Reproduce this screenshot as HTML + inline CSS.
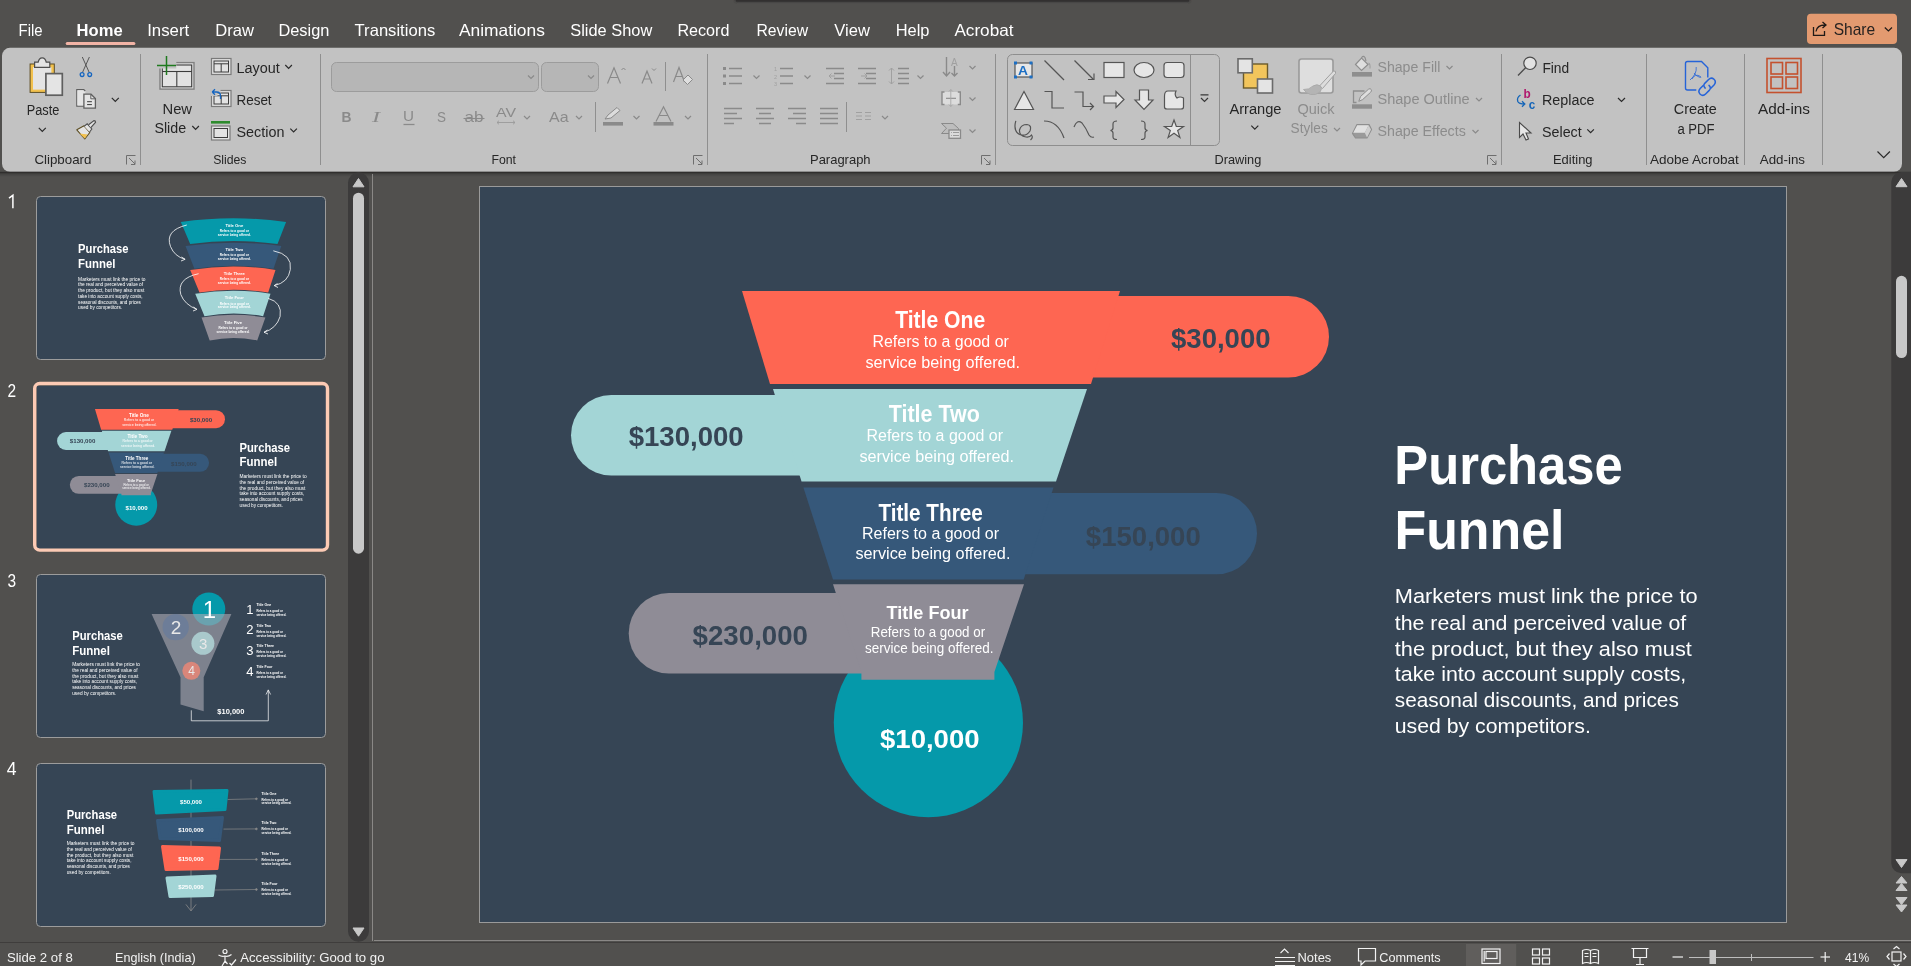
<!DOCTYPE html>
<html><head><meta charset="utf-8">
<style>
html,body{margin:0;padding:0;width:1911px;height:966px;overflow:hidden;background:#51504e;}
svg{display:block;font-family:"Liberation Sans",sans-serif;will-change:transform;}
</style></head>
<body>
<svg width="1911" height="966" viewBox="0 0 1911 966">
<defs>
<filter id="blur1" x="-5%" y="-100%" width="110%" height="300%"><feGaussianBlur stdDeviation="1"/></filter>
</defs>
<!-- background -->
<rect x="0" y="0" width="1911" height="966" fill="#51504e"/>
<!-- top search box shadow -->
<rect x="735" y="-2" width="455" height="4" rx="2" fill="#333130" filter="url(#blur1)"/>
<rect x="736" y="0" width="453" height="1.5" fill="#323030"/>

<!-- TABS -->
<g id="tabs" fill="#ffffff" font-size="16.5">
<text x="18.6" y="36" textLength="24" lengthAdjust="spacingAndGlyphs">File</text>
<text x="76.6" y="36" textLength="46" lengthAdjust="spacingAndGlyphs" font-weight="bold">Home</text>
<text x="147.2" y="36" textLength="42" lengthAdjust="spacingAndGlyphs">Insert</text>
<text x="215.3" y="36" textLength="38.7" lengthAdjust="spacingAndGlyphs">Draw</text>
<text x="278.4" y="36" textLength="51" lengthAdjust="spacingAndGlyphs">Design</text>
<text x="354.6" y="36" textLength="80.6" lengthAdjust="spacingAndGlyphs">Transitions</text>
<text x="458.9" y="36" textLength="86" lengthAdjust="spacingAndGlyphs">Animations</text>
<text x="570.3" y="36" textLength="82" lengthAdjust="spacingAndGlyphs">Slide Show</text>
<text x="677.4" y="36" textLength="52" lengthAdjust="spacingAndGlyphs">Record</text>
<text x="756.4" y="36" textLength="51.7" lengthAdjust="spacingAndGlyphs">Review</text>
<text x="834.3" y="36" textLength="35.6" lengthAdjust="spacingAndGlyphs">View</text>
<text x="895.7" y="36" textLength="33.8" lengthAdjust="spacingAndGlyphs">Help</text>
<text x="954.4" y="36" textLength="59.1" lengthAdjust="spacingAndGlyphs">Acrobat</text>
</g>
<rect x="65.7" y="42" width="69.7" height="3" rx="1.5" fill="#f2b4a6"/>

<!-- Share button -->
<rect x="1807" y="13.8" width="90" height="30.2" rx="4" fill="#e39a70"/>
<text x="1833.7" y="34.8" font-size="17" fill="#262220" textLength="41.5" lengthAdjust="spacingAndGlyphs">Share</text>

<!-- RIBBON -->
<rect x="2" y="47.8" width="1900" height="124" rx="8" fill="#c2c2c2"/>
<g id="ribbon">
<rect x="331.5" y="62.5" width="207" height="29" rx="5" fill="#b6b6b6" stroke="#9c9c9c" stroke-width="1"/>
<rect x="541.5" y="62.5" width="57" height="29" rx="5" fill="#b6b6b6" stroke="#9c9c9c" stroke-width="1"/>
<!-- separators -->
<g stroke="#8f8f8f" stroke-width="1">
<line x1="140.5" y1="54" x2="140.5" y2="165"/>
<line x1="320.5" y1="54" x2="320.5" y2="165"/>
<line x1="707.5" y1="54" x2="707.5" y2="165"/>
<line x1="995.5" y1="54" x2="995.5" y2="165"/>
<line x1="1501.5" y1="54" x2="1501.5" y2="165"/>
<line x1="1646.5" y1="54" x2="1646.5" y2="165"/>
<line x1="1744.5" y1="54" x2="1744.5" y2="165"/>
<line x1="1822.5" y1="54" x2="1822.5" y2="165"/>
<line x1="665.5" y1="62" x2="665.5" y2="91"/>
<line x1="595.5" y1="102" x2="595.5" y2="132"/>
<line x1="846.5" y1="102" x2="846.5" y2="132"/>
</g>
<!-- group labels -->
<g fill="#262626" font-size="13">
<text x="34.4" y="164" textLength="57" lengthAdjust="spacingAndGlyphs">Clipboard</text>
<text x="213.2" y="164" textLength="33.3" lengthAdjust="spacingAndGlyphs">Slides</text>
<text x="491.4" y="164" textLength="24.6" lengthAdjust="spacingAndGlyphs">Font</text>
<text x="810" y="164" textLength="60.6" lengthAdjust="spacingAndGlyphs">Paragraph</text>
<text x="1214.5" y="164" textLength="46.8" lengthAdjust="spacingAndGlyphs">Drawing</text>
<text x="1553" y="164" textLength="39.5" lengthAdjust="spacingAndGlyphs">Editing</text>
<text x="1650" y="164" textLength="88.7" lengthAdjust="spacingAndGlyphs">Adobe Acrobat</text>
<text x="1759.8" y="164" textLength="45.2" lengthAdjust="spacingAndGlyphs">Add-ins</text>
</g>
<!-- button labels -->
<g fill="#262626" font-size="14">
<text x="26.7" y="115.4" textLength="32.6" lengthAdjust="spacingAndGlyphs">Paste</text>
<text x="162.5" y="113.7" textLength="29.5" lengthAdjust="spacingAndGlyphs">New</text>
<text x="154.4" y="133.4" textLength="31.8" lengthAdjust="spacingAndGlyphs">Slide</text>
<text x="236.5" y="73" textLength="43.2" lengthAdjust="spacingAndGlyphs">Layout</text>
<text x="236.5" y="104.5" textLength="35.1" lengthAdjust="spacingAndGlyphs">Reset</text>
<text x="236.5" y="136.6" textLength="47.9" lengthAdjust="spacingAndGlyphs">Section</text>
<text x="1229.4" y="113.6" textLength="52.1" lengthAdjust="spacingAndGlyphs">Arrange</text>
<text x="1542.4" y="72.7" textLength="26.8" lengthAdjust="spacingAndGlyphs">Find</text>
<text x="1542" y="105" textLength="52.6" lengthAdjust="spacingAndGlyphs">Replace</text>
<text x="1542" y="136.6" textLength="39.7" lengthAdjust="spacingAndGlyphs">Select</text>
<text x="1673.8" y="114.2" textLength="43" lengthAdjust="spacingAndGlyphs">Create</text>
<text x="1677.4" y="134" textLength="37.2" lengthAdjust="spacingAndGlyphs">a PDF</text>
<text x="1758" y="114.2" textLength="52" lengthAdjust="spacingAndGlyphs">Add-ins</text>
</g>
<g fill="#8c8c8c" font-size="14">
<text x="1297.4" y="113.6" textLength="37.2" lengthAdjust="spacingAndGlyphs">Quick</text>
<text x="1290.6" y="133.3" textLength="37.1" lengthAdjust="spacingAndGlyphs">Styles</text>
<text x="1377.5" y="72.3" textLength="62.8" lengthAdjust="spacingAndGlyphs">Shape Fill</text>
<text x="1377.5" y="104.4" textLength="92.1" lengthAdjust="spacingAndGlyphs">Shape Outline</text>
<text x="1377.5" y="136.3" textLength="88.3" lengthAdjust="spacingAndGlyphs">Shape Effects</text>
</g>
<!-- chevrons enabled -->
<g fill="none" stroke="#2a2a2a" stroke-width="1.2">
<polyline points="38.8,127.8 42.3,131.3 45.8,127.8"/>
<polyline points="111.8,97.8 115.3,101.3 118.8,97.8"/>
<polyline points="192.3,126 195.6,129.3 198.9,126"/>
<polyline points="285.3,65 288.6,68.3 291.9,65"/>
<polyline points="290.3,128.6 293.6,131.9 296.9,128.6"/>
<polyline points="1251.3,125.6 1254.8,129.1 1258.3,125.6"/>
<polyline points="1618,98 1621.5,101.5 1625,98"/>
<polyline points="1587.3,129.3 1590.6,132.6 1593.9,129.3"/>
<polyline points="1877.5,151.5 1883.7,157.7 1889.9,151.5"/>
</g>
<!-- chevrons disabled -->
<g fill="none" stroke="#8a8a8a" stroke-width="1.2">
<polyline points="528,75.5 531,78.5 534,75.5"/>
<polyline points="588,75.5 591,78.5 594,75.5"/>
<polyline points="524,116 527,119 530,116"/>
<polyline points="576,116 579,119 582,116"/>
<polyline points="633.5,116 636.5,119 639.5,116"/>
<polyline points="685,116 688,119 691,116"/>
<polyline points="753.5,75.5 756.5,78.5 759.5,75.5"/>
<polyline points="804.5,75.5 807.5,78.5 810.5,75.5"/>
<polyline points="917.5,75.5 920.5,78.5 923.5,75.5"/>
<polyline points="969.5,66 972.5,69 975.5,66"/>
<polyline points="969.5,97.5 972.5,100.5 975.5,97.5"/>
<polyline points="969.5,129.5 972.5,132.5 975.5,129.5"/>
<polyline points="882,116 885,119 888,116"/>
<polyline points="1334,128 1337,131 1340,128"/>
<polyline points="1446.5,66 1449.5,69 1452.5,66"/>
<polyline points="1476,98 1479,101 1482,98"/>
<polyline points="1472.5,130 1475.5,133 1478.5,130"/>
</g>
<!-- launchers -->
<g fill="none" stroke="#6e6e6e" stroke-width="1">
<path d="M126.5,164.5 V155.5 H135.5 M129,158 L135,164 M135,160.5 V164.5 H131"/>
<path d="M693.5,164.5 V155.5 H702.5 M696,158 L702,164 M702,160.5 V164.5 H698"/>
<path d="M981.5,164.5 V155.5 H990.5 M984,158 L990,164 M990,160.5 V164.5 H986"/>
<path d="M1487.5,164.5 V155.5 H1496.5 M1490,158 L1496,164 M1496,160.5 V164.5 H1492"/>
</g>

<!-- CLIPBOARD ICONS -->
<!-- paste -->
<rect x="29.6" y="63.5" width="25.2" height="29.4" fill="#5c4d22"/>
<rect x="30.6" y="64.5" width="23.2" height="27.4" fill="#f2c14e"/>
<rect x="33" y="67" width="18.4" height="22.6" fill="#e4e4e4"/>
<path d="M34.6,67.4 V62.2 H38.2 Q39,57.8 42.2,57.8 Q45.4,57.8 46.2,62.2 H49.8 V67.4 Z" fill="#e4e4e4" stroke="#4e4e4e" stroke-width="1.2"/>
<rect x="45.9" y="73.6" width="16.4" height="21.6" fill="#e4e4e4" stroke="#5f5f5f" stroke-width="1.7"/>
<!-- cut -->
<g stroke="#4a4a4a" stroke-width="0.9" fill="none">
<line x1="82.3" y1="57" x2="89.2" y2="72.4"/>
<line x1="89.4" y1="57" x2="82.5" y2="72.4"/>
</g>
<g stroke="#1565c0" stroke-width="1.3" fill="none">
<circle cx="82.1" cy="74.6" r="1.9"/>
<circle cx="89.7" cy="74.6" r="1.9"/>
</g>
<!-- copy -->
<path d="M85.3,106.2 H76.8 V89.7 H83.8 L85.3,91.2" fill="#e4e4e4" stroke="#5f5f5f" stroke-width="1.2"/>
<rect x="77.4" y="90.3" width="6" height="15.2" fill="#e4e4e4"/>
<path d="M83.9,108.2 V94.2 H91 L95.4,98.6 V108.2 Z" fill="#e4e4e4" stroke="#5f5f5f" stroke-width="1.3"/>
<path d="M90.8,94.4 V98.8 H95.2" fill="none" stroke="#5f5f5f" stroke-width="1"/>
<g stroke="#3a3a3a" stroke-width="1"><line x1="87.1" y1="101.7" x2="91.9" y2="101.7"/><line x1="87.1" y1="104.6" x2="91.9" y2="104.6"/></g>
<!-- format painter -->
<path d="M76.8,129.8 L84,125.8 L89.8,132.5 L84.8,139 Z" fill="#e4e4e4" stroke="#5c4d22" stroke-width="1.1" stroke-linejoin="round"/>
<path d="M79.5,133.6 L87.6,134.6 L84.8,138.6 Z" fill="#f2c14e"/>
<path d="M84.2,126.2 L87.2,123.8 L91.8,129 L89.6,132" fill="#e4e4e4" stroke="#4e4e4e" stroke-width="1.1"/>
<path d="M88.6,124.8 L94,120.6 Q95.6,120.6 95.6,122.2 L90.8,127.6" fill="#e4e4e4" stroke="#4e4e4e" stroke-width="1.1"/>

<!-- SLIDES ICONS -->
<rect x="160" y="62.6" width="34" height="26.5" fill="#e2e2e2" stroke="#808080" stroke-width="1.4"/>
<rect x="162.3" y="65" width="29.4" height="21.8" fill="#e2e2e2" stroke="#3c3c3c" stroke-width="1.1"/>
<line x1="162.3" y1="71.5" x2="191.7" y2="71.5" stroke="#3c3c3c" stroke-width="1.1"/>
<line x1="176.8" y1="71.5" x2="176.8" y2="86.8" stroke="#3c3c3c" stroke-width="1.1"/>
<rect x="158.3" y="60.5" width="18" height="8" fill="#c2c2c2"/>
<g stroke="#1f7a1f" stroke-width="1.5"><line x1="157" y1="65.5" x2="176" y2="65.5"/><line x1="166.5" y1="56" x2="166.5" y2="75"/></g>
<!-- layout -->
<rect x="211.5" y="58.5" width="19.5" height="16" fill="#e2e2e2" stroke="#7a7a7a" stroke-width="1.2"/>
<rect x="214" y="61" width="14.5" height="11" fill="#e2e2e2" stroke="#3c3c3c" stroke-width="1"/>
<line x1="214" y1="63.8" x2="228.5" y2="63.8" stroke="#3c3c3c" stroke-width="1"/>
<line x1="221.2" y1="63.8" x2="221.2" y2="72" stroke="#3c3c3c" stroke-width="1"/>
<!-- reset -->
<rect x="211.5" y="90.5" width="19.5" height="16" fill="#e2e2e2" stroke="#7a7a7a" stroke-width="1.2"/>
<rect x="214" y="93" width="14.5" height="11" fill="#e2e2e2" stroke="#3c3c3c" stroke-width="1"/>
<line x1="214" y1="95.8" x2="228.5" y2="95.8" stroke="#3c3c3c" stroke-width="1"/>
<line x1="221.2" y1="95.8" x2="221.2" y2="104" stroke="#3c3c3c" stroke-width="1"/>
<path d="M210.5,89 h10 v4 h-3 v3 h-7 Z" fill="#c2c2c2"/>
<path d="M212.2,92 L215,89.2 M212.2,92 L215,94.8 M212.2,92 H216.5 Q220.5,92 220.5,96 V99" fill="none" stroke="#1565c0" stroke-width="1.3"/>
<!-- section -->
<rect x="211" y="121" width="19" height="2.6" fill="#2e8b2e"/>
<rect x="211.5" y="126" width="18.5" height="14" fill="#e2e2e2" stroke="#7a7a7a" stroke-width="1.2"/>
<rect x="214" y="128.5" width="13.5" height="9" fill="#e2e2e2" stroke="#3c3c3c" stroke-width="1"/>

<!-- FONT GROUP -->
<g fill="none" stroke="#8a8a8a" stroke-width="1.2">
<path d="M607.5,83.5 L614,67.8 L620.5,83.5 M610,77.5 H618"/>
<path d="M642,83.5 L647,71.2 L652,83.5 M643.8,79 H650.2"/>
<path d="M673.5,82 L679,67.5 L684.5,82 M675.8,76.5 H682"/>
<path d="M656,121.5 L663.5,106.8 L671,121.5 M659,115.5 H668"/>
</g>
<g fill="none" stroke="#8a8a8a" stroke-width="1">
<polyline points="621.5,70 623.5,68 625.5,70"/>
<polyline points="652,68.5 654,70.5 656,68.5"/>
</g>
<path d="M683,80 L688,75 L692.5,79.5 L687.5,84.5 Z" fill="#dedede" stroke="#8a8a8a" stroke-width="1"/>
<g fill="#8a8a8a" font-size="15">
<text x="341.4" y="122" font-weight="bold" textLength="10" lengthAdjust="spacingAndGlyphs">B</text>
<text x="372" y="122" font-style="italic" font-family="Liberation Serif" textLength="8" lengthAdjust="spacingAndGlyphs">I</text>
<text x="403" y="121" textLength="11" lengthAdjust="spacingAndGlyphs">U</text>
<text x="437" y="122" textLength="9" lengthAdjust="spacingAndGlyphs">S</text>
<text x="464.5" y="122" font-size="14" textLength="19" lengthAdjust="spacingAndGlyphs">ab</text>
<text x="496" y="117" font-size="13" textLength="20" lengthAdjust="spacingAndGlyphs">AV</text>
<text x="549" y="122" font-size="15" textLength="19.5" lengthAdjust="spacingAndGlyphs">Aa</text>
</g>
<line x1="403.5" y1="124.5" x2="414.5" y2="124.5" stroke="#8a8a8a" stroke-width="1.3"/>
<line x1="463.5" y1="118.5" x2="484.5" y2="118.5" stroke="#8a8a8a" stroke-width="1.1"/>
<g fill="none" stroke="#9a9a9a" stroke-width="0.9"><path d="M497,122.5 H515 M497,122.5 l2,-1.8 M497,122.5 l2,1.8 M515,122.5 l-2,-1.8 M515,122.5 l-2,1.8"/></g>
<rect x="603" y="122" width="20" height="3.6" fill="#8a8a8a"/>
<path d="M605,119 L608,115 L617,107.5 L620,110.5 L611,118 Z" fill="#dcdcdc" stroke="#8a8a8a" stroke-width="1"/>
<rect x="653.5" y="122" width="20" height="3.6" fill="#8a8a8a"/>

<!-- PARAGRAPH GROUP -->
<g fill="#8a8a8a">
<rect x="723" y="67" width="3" height="3"/><rect x="723" y="74.5" width="3" height="3"/><rect x="723" y="82" width="3" height="3"/>
</g>
<g stroke="#8a8a8a" stroke-width="1.5" fill="none">
<path d="M729,68.5 H742 M729,76 H742 M729,83.5 H742"/>
<path d="M780,68.5 H793 M780,76 H793 M780,83.5 H793"/>
<path d="M826,68.5 H844 M834,73.5 H844 M834,78.5 H844 M826,83.5 H844"/>
<path d="M858,68.5 H876 M866,73.5 H876 M866,78.5 H876 M858,83.5 H876"/>
<path d="M898,68.5 H909 M898,73.5 H909 M898,78.5 H909 M898,83.5 H909"/>
<path d="M724,108.5 H742 M724,113.5 H737 M724,118.5 H742 M724,123.5 H734"/>
<path d="M756,108.5 H774 M759,113.5 H771 M756,118.5 H774 M759,123.5 H771"/>
<path d="M788,108.5 H806 M793,113.5 H806 M788,118.5 H806 M796,123.5 H806"/>
<path d="M820,108.5 H838 M820,113.5 H838 M820,118.5 H838 M820,123.5 H838"/>
</g>
<g stroke="#a0a0a0" stroke-width="1" fill="none">
<path d="M856,112.5 H862 M856,116 H862 M856,119.5 H862 M865,112.5 H871 M865,116 H871 M865,119.5 H871"/>
<path d="M829,76 H835 M829,76 l2.5,-2.5 M829,76 l2.5,2.5"/>
<path d="M861,76 H867 M867,76 l-2.5,-2.5 M867,76 l-2.5,2.5"/>
<path d="M891.5,68 V84 M891.5,68 l-2.5,2.5 M891.5,68 l2.5,2.5 M891.5,84 l-2.5,-2.5 M891.5,84 l2.5,-2.5"/>
</g>
<g fill="#a0a0a0" font-size="5.5"><text x="774" y="71">1</text><text x="774" y="78.5">2</text><text x="774" y="86">3</text></g>
<!-- text direction -->
<g stroke="#8a8a8a" stroke-width="1.4" fill="none">
<path d="M946.5,57 V76 M943,72 L946.5,76 L950,72"/>
<path d="M954.5,66 V76 M951.5,73 L954.5,76 L957.5,73"/>
</g>
<text x="951" y="66" font-size="10" fill="#a0a0a0">A</text>
<!-- align text -->
<rect x="942" y="92" width="18.3" height="12.5" fill="#dcdcdc"/>
<path d="M944.5,92 H942 V104.5 H944.5 M957.8,92 H960.3 V104.5 H957.8" fill="none" stroke="#8a8a8a" stroke-width="1.4"/>
<line x1="946" y1="98.3" x2="956" y2="98.3" stroke="#8a8a8a" stroke-width="1.1"/>
<path d="M950.8,89.5 V106.5 M948.8,91.5 l2,-2 l2,2 M948.8,104.5 l2,2 l2,-2" stroke="#a8a8a8" fill="none" stroke-width="0.9"/>
<!-- smartart -->
<path d="M941.5,133.5 L946.5,128.2 L941.5,123.5 H953 L958.5,128.5 V133.5 Z" fill="#bdbdbd" stroke="#8a8a8a" stroke-width="1"/>
<rect x="949" y="130" width="11.5" height="8.3" fill="#dcdcdc" stroke="#8a8a8a" stroke-width="1.3"/>
<path d="M951,132.5 h0.8 M951,135.5 h0.8 M953,132.5 H959 M953,135.5 H959" stroke="#8a8a8a" stroke-width="0.8"/>

<!-- DRAWING GALLERY -->
<rect x="1007.5" y="54.5" width="212" height="91" rx="5" fill="none" stroke="#8e8e8e" stroke-width="1"/>
<line x1="1190.5" y1="54.5" x2="1190.5" y2="145.5" stroke="#8e8e8e" stroke-width="1"/>
<g stroke="#383838" stroke-width="1.2" fill="none"><path d="M1200.5,94.8 H1208.5 M1201,98 L1204.5,101.5 L1208,98"/></g>
<g stroke="#555" stroke-width="1.2" fill="#e6e6e6">
<rect x="1015" y="63" width="17" height="14"/>
<rect x="1104" y="62.5" width="20" height="15"/>
<ellipse cx="1144" cy="70" rx="10" ry="7.5"/>
<rect x="1164" y="62.5" width="20" height="15" rx="3"/>
<path d="M1014.5,109.5 L1024,91.5 L1033.5,109.5 Z"/>
<path d="M1104,96 H1116 V91.5 L1124,99.5 L1116,107.5 V103 H1104 Z"/>
<path d="M1139.5,90 H1148.5 V100 H1153 L1144,109.5 L1135,100 H1139.5 Z"/>
<path d="M1164.5,96 Q1164.5,91 1168,91 H1176 Q1174,95 1177,98 Q1180,96 1183.5,98 V107 Q1183.5,109 1181,109 H1167 Q1164.5,109 1164.5,107 Z"/>
<path d="M1139.5,120 L1141.8,126.5 L1149,126.5 L1143.2,130.6 L1145.4,137.5 L1139.5,133.3 L1133.6,137.5 L1135.8,130.6 L1130,126.5 L1137.2,126.5 Z" transform="translate(34.5,0)"/>
</g>
<g stroke="#555" stroke-width="1.2" fill="none">
<line x1="1044.5" y1="60.5" x2="1064" y2="80"/>
<line x1="1074.5" y1="60.5" x2="1093.5" y2="79.5"/>
<path d="M1088,79.5 H1094 V73.5"/>
<path d="M1044.5,91.5 H1052 V108 H1064"/>
<path d="M1074.5,92 H1083 V106.5 H1093.5 M1090,103 L1093.5,106.5 L1090,110"/>
<path d="M1015.8,120.8 Q1013,131 1019.5,134.5 Q1026,137 1030,131 Q1032,125 1027,124.5 Q1021,124.5 1019.5,130 Q1019,136 1026,137 Q1030,137.5 1031.5,135 Q1033.5,137.5 1030.5,140"/>
<path d="M1044,121 Q1058,121 1064,138"/>
<path d="M1074,127 Q1077,119 1082,123 Q1086,128 1089,135 Q1091,138 1094,137"/>
<path d="M1117,121 Q1113,121 1113,124 V128 Q1113,130 1110.5,130.5 Q1113,131 1113,133 V137 Q1113,139.5 1117,139.5"/>
<path d="M1141,121 Q1145,121 1145,124 V128 Q1145,130 1147.5,130.5 Q1145,131 1145,133 V137 Q1145,139.5 1141,139.5"/>
</g>
<!-- text box icon -->
<g fill="#1c6fc4">
<rect x="1014" y="61.5" width="3" height="3"/><rect x="1029.5" y="61.5" width="3" height="3"/>
<rect x="1014" y="75.5" width="3" height="3"/><rect x="1029.5" y="75.5" width="3" height="3"/>
</g>
<text x="1018" y="75" font-size="12" font-weight="bold" fill="#1c6fc4" textLength="10" lengthAdjust="spacingAndGlyphs">A</text>

<!-- ARRANGE -->
<rect x="1243.5" y="64" width="24" height="24" fill="#f2c55c" stroke="#6b5a2a" stroke-width="1.4"/>
<rect x="1238" y="58.8" width="14.3" height="14" fill="#e4e4e4" stroke="#6a6a6a" stroke-width="1.6"/>
<rect x="1257.5" y="79" width="15" height="14" fill="#e4e4e4" stroke="#6a6a6a" stroke-width="1.6"/>
<!-- QUICK STYLES -->
<rect x="1299" y="59" width="34" height="34" rx="2.5" fill="#dedede" stroke="#9a9a9a" stroke-width="1.6"/>
<path d="M1333.5,71 Q1336.5,70.5 1335.5,73.5 L1322.5,88.5 L1319.5,86 Z" fill="#dcdcdc" stroke="#a0a0a0" stroke-width="1"/>
<path d="M1303.5,89.5 Q1309,90 1313,86 Q1317,83.5 1320.5,86 Q1322.5,89 1320,92 Q1316,95.5 1310.5,94.5 Q1306,93 1303.5,89.5 Z" fill="#b4b4b4" stroke="#a8a8a8" stroke-width="0.9"/>
<!-- shape fill -->
<rect x="1352" y="72" width="20" height="4.6" fill="#8e8e8e"/>
<path d="M1355.5,64.5 L1361.5,58 L1368,64.5 L1361.5,70.5 Z" fill="#dedede" stroke="#8e8e8e" stroke-width="1.2"/>
<path d="M1361.5,58 Q1363,55 1365,57.5 L1366,61" fill="none" stroke="#8e8e8e" stroke-width="1.1"/>
<path d="M1368.5,63 Q1370.5,64 1370,68.5" fill="none" stroke="#a0a0a0" stroke-width="1.1"/>
<!-- shape outline -->
<rect x="1352" y="104.3" width="20" height="4.4" fill="#8e8e8e"/>
<path d="M1356.5,102.5 H1353.5 V91 H1364.5" fill="none" stroke="#8e8e8e" stroke-width="1.3"/>
<path d="M1358.8,101.3 L1360.5,96.5 L1368.5,89.2 Q1370.3,88 1371.2,89.5 Q1372,91 1370.7,92.2 L1362.6,99.6 Z" fill="#dedede" stroke="#8e8e8e" stroke-width="1"/>
<!-- shape effects -->
<path d="M1352.5,133.5 L1357,124.5 H1369 L1371.5,129.5 L1367,138 H1355.5 Z" fill="#9a9a9a" stroke="#8e8e8e" stroke-width="1.2" stroke-linejoin="round"/>
<path d="M1353.2,132.8 L1357.2,125.2 H1368.6 L1364.8,132.8 Z" fill="#e0e0e0"/>
<path d="M1364.8,132.8 L1368.6,125.2 L1371,129.6 L1367,137.4 Z" fill="#cfcfcf"/>

<!-- EDITING -->
<circle cx="1530" cy="63.3" r="6.2" fill="#e2e2e2" stroke="#4a4a4a" stroke-width="1.2"/>
<line x1="1525.6" y1="67.7" x2="1518" y2="75.5" stroke="#4a4a4a" stroke-width="1.3"/>
<text x="1523.6" y="98.3" font-size="12.5" font-weight="bold" fill="#b0186e" textLength="7.2" lengthAdjust="spacingAndGlyphs">b</text>
<text x="1528.8" y="108.6" font-size="12.5" font-weight="bold" fill="#1565b8" textLength="6.5" lengthAdjust="spacingAndGlyphs">c</text>
<path d="M1520.5,95 Q1516.5,97.5 1517.8,101.5 Q1519,104 1524.5,104 M1522,101.2 L1524.8,104 L1522,106.8" fill="none" stroke="#1565b8" stroke-width="1.3"/>
<path d="M1519.5,122.5 V137.5 L1523,134 L1526,140 L1528.5,139 L1526,133 H1531 Z" fill="#e6e6e6" stroke="#4a4a4a" stroke-width="1.1"/>
<!-- create pdf -->
<path d="M1696.3,90 H1687.5 Q1685.5,90 1685.5,88 V63.5 Q1685.5,61.5 1687.5,61.5 H1701.5 L1707.8,67.8 V77.5" fill="none" stroke="#2563d8" stroke-width="1.4"/>
<path d="M1696.2,67 Q1697,74 1690,80 M1692,79 Q1695,73 1700.5,76.5 Q1702,78 1699,77 Q1696,76 1694,73" fill="none" stroke="#2563d8" stroke-width="0.8"/>
<g fill="none" stroke="#2563d8" stroke-width="1.5" stroke-linecap="round">
<path d="M1703.2,85.5 L1700.2,88.5 Q1697.5,91.5 1700.2,94.2 Q1702.9,96.7 1705.6,94 L1709.2,90.4 Q1711.6,87.8 1709,85.4"/>
<path d="M1710.8,88.2 L1714,85 Q1716.7,82 1714,79.3 Q1711.3,76.8 1708.6,79.5 L1705,83.1 Q1702.6,85.7 1705.2,88.1"/>
</g>
<!-- add-ins -->
<g fill="none" stroke="#c4512e" stroke-width="1.6">
<rect x="1767" y="58.5" width="34" height="34"/>
<rect x="1771" y="62.5" width="11.5" height="11.5"/>
<rect x="1786" y="62.5" width="11.5" height="11.5"/>
<rect x="1771" y="77" width="11.5" height="11.5"/>
<rect x="1786" y="77" width="11.5" height="11.5"/>
</g>
</g>


<!-- ribbon bottom shadow -->
<linearGradient id="shd" x1="0" y1="0" x2="0" y2="1"><stop offset="0" stop-color="#000" stop-opacity="0.22"/><stop offset="1" stop-color="#000" stop-opacity="0"/></linearGradient>
<rect x="0" y="173" width="1911" height="4" fill="url(#shd)"/>
<rect x="0" y="171.8" width="1911" height="1.4" fill="#302e2d"/>

<!-- LEFT PANEL -->
<g id="leftpanel">
<!-- slide numbers -->
<g fill="#ffffff" font-size="18.5">

<text x="7.6" y="397.3" textLength="8.6" lengthAdjust="spacingAndGlyphs">2</text>
<text x="7.6" y="586.6" textLength="8.6" lengthAdjust="spacingAndGlyphs">3</text>
<text x="6.8" y="775" textLength="9.8" lengthAdjust="spacingAndGlyphs">4</text>
</g>
<path d="M9,198.2 L12.9,195.3 V208.2" fill="none" stroke="#ffffff" stroke-width="1.5"/>
<!-- scrollbar -->
<rect x="348" y="172.3" width="21" height="769.5" rx="10.5" fill="#3c3b3b"/>
<path d="M358.5,178.5 L364,186.8 H353 Z" fill="#c8c8c8" stroke="#c8c8c8" stroke-width="1" stroke-linejoin="round"/>
<rect x="353" y="192.7" width="11" height="361" rx="5.5" fill="#c8c8c8"/>
<path d="M358.5,936.2 L364,928 H353 Z" fill="#c8c8c8" stroke="#c8c8c8" stroke-width="1" stroke-linejoin="round"/>
<line x1="372.5" y1="174" x2="372.5" y2="941" stroke="#8a8886" stroke-width="1"/>

<!-- THUMB 1 -->
<g transform="translate(36.5,196.5)">
<rect x="0" y="0" width="289" height="163" rx="4" fill="#364555" stroke="#9c9c9c" stroke-width="1"/>
<g fill="#ffffff" font-weight="bold" font-size="12.5">
<text x="41.6" y="56.9" textLength="50.4" lengthAdjust="spacingAndGlyphs">Purchase</text>
<text x="41.6" y="71.6" textLength="37.4" lengthAdjust="spacingAndGlyphs">Funnel</text>
</g>
<g fill="#ffffff" font-size="5.4">
<text x="41.6" y="84" textLength="67.4" lengthAdjust="spacingAndGlyphs">Marketers must link the price to</text>
<text x="41.6" y="89.8" textLength="65" lengthAdjust="spacingAndGlyphs">the real and perceived value of</text>
<text x="41.6" y="95.6" textLength="66.2" lengthAdjust="spacingAndGlyphs">the product, but they also must</text>
<text x="41.6" y="101.2" textLength="64.5" lengthAdjust="spacingAndGlyphs">take into account supply costs,</text>
<text x="41.6" y="107" textLength="62.8" lengthAdjust="spacingAndGlyphs">seasonal discounts, and prices</text>
<text x="41.6" y="112.5" textLength="44.1" lengthAdjust="spacingAndGlyphs">used by competitors.</text>
</g>
<path d="M144.3,25.5 Q197,18 249.6,25.5 L241,47.5 Q197,41.5 153.7,47.5 Z" fill="#0599aa"/>
<path d="M149,49.5 Q197,43 244.8,49.5 L237,72.2 Q197,66.5 157.9,72.2 Z" fill="#36587a"/>
<path d="M153.7,73.5 Q197,66.5 239,73.5 L231.7,96 Q197,90.5 163,96 Z" fill="#fe6652"/>
<path d="M158.7,97.3 Q197,91 234,97.3 L226.6,119.7 Q197,114.5 168,119.7 Z" fill="#a3d5d6"/>
<path d="M165,121 Q197,115.5 228.9,121 L220.7,144 Q197,139 173.2,144 Z" fill="#8f8c96"/>
<g fill="none" stroke="#ffffff" stroke-width="0.8">
<path d="M150.3,28.5 Q128,34 134,50 Q138,60 148.6,62.8"/>
<path d="M236.8,54.3 Q256,58 253.8,73 Q252,86 237.7,89.1"/>
<path d="M162.1,77.2 Q140,82 144.3,98 Q148,108 160.4,112.9"/>
<path d="M231.7,101.9 Q246,106 243.6,120 Q240,132 227.5,135.8"/>
<path d="M145,60.5 L148.6,62.8 L144.5,64.5 M241,87 L237.7,89.1 L241.5,91 M157,110.5 L160.4,112.9 L156.5,114.5 M231,133.5 L227.5,135.8 L231.5,137.5"/>
</g>
<g fill="#ffffff" font-weight="bold" text-anchor="middle">
<g font-size="4.2"><text x="197.8" y="30.6">Title One</text><text x="197.8" y="54.7">Title Two</text><text x="197.8" y="78.8">Title Three</text><text x="197.8" y="102.9">Title Four</text><text x="196.5" y="127">Title Five</text></g>
<g font-size="3.2"><text x="197.8" y="35.7">Refers to a good or</text><text x="197.8" y="39.6">service being offered.</text>
<text x="197.8" y="59.8">Refers to a good or</text><text x="197.8" y="63.7">service being offered.</text>
<text x="197.8" y="83.9">Refers to a good or</text><text x="197.8" y="87.8">service being offered.</text>
<text x="197.8" y="108">Refers to a good or</text><text x="197.8" y="111.9">service being offered.</text>
<text x="196.5" y="132.1">Refers to a good or</text><text x="196.5" y="136">service being offered.</text></g>
</g>
</g>

<!-- THUMB 2 (selected) -->
<g transform="translate(36.9,386) scale(0.22155) translate(-480,-187)">
<use href="#slide2"/>
</g>
<rect x="34.7" y="383.5" width="292.8" height="166.6" rx="5" fill="none" stroke="#fccab4" stroke-width="3.4"/>

<!-- THUMB 3 -->
<g transform="translate(36.5,574.5)">
<rect x="0" y="0" width="289" height="163" rx="4" fill="#364555" stroke="#9c9c9c" stroke-width="1"/>
<g fill="#ffffff" font-weight="bold" font-size="12.5">
<text x="35.7" y="65.9" textLength="50.6" lengthAdjust="spacingAndGlyphs">Purchase</text>
<text x="35.7" y="80.6" textLength="37.7" lengthAdjust="spacingAndGlyphs">Funnel</text>
</g>
<g fill="#ffffff" font-size="5.4">
<text x="35.7" y="91.7" textLength="67.9" lengthAdjust="spacingAndGlyphs">Marketers must link the price to</text>
<text x="35.7" y="97.6" textLength="65.4" lengthAdjust="spacingAndGlyphs">the real and perceived value of</text>
<text x="35.7" y="103.2" textLength="66.2" lengthAdjust="spacingAndGlyphs">the product, but they also must</text>
<text x="35.7" y="108.7" textLength="64.9" lengthAdjust="spacingAndGlyphs">take into account supply costs,</text>
<text x="35.7" y="114.6" textLength="63.7" lengthAdjust="spacingAndGlyphs">seasonal discounts, and prices</text>
<text x="35.7" y="120.5" textLength="44.1" lengthAdjust="spacingAndGlyphs">used by competitors.</text>
</g>
<circle cx="172.3" cy="34.5" r="16.5" fill="#0599aa"/>
<path d="M115.1,39.4 H194.9 L167.2,102.7 V136.7 L144,129.9 V102.7 Z" fill="#a9a8b2" opacity="0.62"/>
<circle cx="139.2" cy="52.6" r="13.2" fill="#6d7d98"/>
<circle cx="166.4" cy="68.8" r="11.5" fill="#a9c9cc"/>
<circle cx="154.8" cy="96.3" r="9" fill="#d9867a"/>
<g fill="#e8e8e8" text-anchor="middle">
<text x="173" y="43.5" font-size="24" fill="#ffffff">1</text>
<text x="139.5" y="59.5" font-size="19">2</text>
<text x="166.6" y="74.6" font-size="15">3</text>
<text x="155" y="100.8" font-size="12">4</text>
</g>
<g fill="#ffffff" font-size="13">
<text x="209.7" y="39.9">1</text><text x="209.7" y="59.8">2</text><text x="209.7" y="80.6">3</text><text x="209.7" y="101.5">4</text>
</g>
<g fill="#ffffff" font-weight="bold">
<g font-size="3.5"><text x="219.9" y="31.7">Title One</text><text x="219.9" y="52.5">Title Two</text><text x="219.9" y="72.6">Title Three</text><text x="219.9" y="93.5">Title Four</text></g>
<g font-size="2.9"><text x="219.9" y="37.5">Refers to a good or</text><text x="219.9" y="41">service being offered.</text>
<text x="219.9" y="58.5">Refers to a good or</text><text x="219.9" y="62">service being offered.</text>
<text x="219.9" y="78.5">Refers to a good or</text><text x="219.9" y="82">service being offered.</text>
<text x="219.9" y="99.5">Refers to a good or</text><text x="219.9" y="103">service being offered.</text></g>
</g>
<path d="M154.8,135.8 V146.3 H231.8 V115.4 M229.5,120 L231.8,115.4 L234.1,120" fill="none" stroke="#ffffff" stroke-width="0.7"/>
<text x="180.8" y="139.6" font-size="6.3" font-weight="bold" fill="#ffffff" textLength="27.2" lengthAdjust="spacingAndGlyphs">$10,000</text>
</g>

<!-- THUMB 4 -->
<g transform="translate(36.5,763.5)">
<rect x="0" y="0" width="289" height="163" rx="4" fill="#364555" stroke="#9c9c9c" stroke-width="1"/>
<g fill="#ffffff" font-weight="bold" font-size="12.5">
<text x="30.2" y="55.7" textLength="50.4" lengthAdjust="spacingAndGlyphs">Purchase</text>
<text x="30.2" y="70.5" textLength="37.7" lengthAdjust="spacingAndGlyphs">Funnel</text>
</g>
<g fill="#ffffff" font-size="5.4">
<text x="30.2" y="81.5" textLength="67.9" lengthAdjust="spacingAndGlyphs">Marketers must link the price to</text>
<text x="30.2" y="87.4" textLength="65.2" lengthAdjust="spacingAndGlyphs">the real and perceived value of</text>
<text x="30.2" y="93.4" textLength="66.6" lengthAdjust="spacingAndGlyphs">the product, but they also must</text>
<text x="30.2" y="98.8" textLength="64.9" lengthAdjust="spacingAndGlyphs">take into account supply costs,</text>
<text x="30.2" y="104.4" textLength="63.2" lengthAdjust="spacingAndGlyphs">seasonal discounts, and prices</text>
<text x="30.2" y="110.4" textLength="44.1" lengthAdjust="spacingAndGlyphs">used by competitors.</text>
</g>
<path d="M154.5,16.1 V147.4 M149.4,140.9 L154.5,147.4 L159.6,140.9" fill="none" stroke="#8a8a8a" stroke-width="0.8"/>
<g stroke="#8a8a8a" stroke-width="0.7" fill="#8a8a8a">
<path d="M191,36 L219.9,35.3" fill="none"/><circle cx="219.9" cy="35.3" r="0.9"/>
<path d="M187,65.6 L219.9,65.4" fill="none"/><circle cx="219.9" cy="65.4" r="0.9"/>
<path d="M182,95.9 L219.9,95.9" fill="none"/><circle cx="219.9" cy="95.9" r="0.9"/>
<path d="M178,126.5 L219.9,126" fill="none"/><circle cx="219.9" cy="126" r="0.9"/>
</g>
<g stroke-linejoin="round" stroke-width="3">
<path d="M117.5,28 L190.5,27 L188.5,46 L120,49.5 Z" fill="#0599aa" stroke="#0599aa"/>
<path d="M121,57 L186,54 L183,77 L123.5,75 Z" fill="#36587a" stroke="#36587a"/>
<path d="M126,83 L183,84.5 L180.5,105 L129.5,106 Z" fill="#fe6652" stroke="#fe6652"/>
<path d="M130.5,114.5 L178.5,112.5 L176,132 L133.5,133 Z" fill="#a3d5d6" stroke="#a3d5d6"/>
</g>
<g fill="#ffffff" font-weight="bold" font-size="5.2" text-anchor="middle">
<text x="154.5" y="40" textLength="22" lengthAdjust="spacingAndGlyphs">$50,000</text>
<text x="154.5" y="68.4" textLength="25.5" lengthAdjust="spacingAndGlyphs">$100,000</text>
<text x="154.5" y="97.2" textLength="25.5" lengthAdjust="spacingAndGlyphs">$150,000</text>
<text x="154.5" y="125.2" textLength="25.5" lengthAdjust="spacingAndGlyphs">$250,000</text>
</g>
<g fill="#ffffff" font-weight="bold">
<g font-size="3.5"><text x="225" y="31.4">Title One</text><text x="225" y="60.5">Title Two</text><text x="225" y="91.5">Title Three</text><text x="225" y="121.5">Title Four</text></g>
<g font-size="2.9"><text x="225" y="37">Refers to a good or</text><text x="225" y="40.8">service being offered.</text>
<text x="225" y="66.5">Refers to a good or</text><text x="225" y="70.3">service being offered.</text>
<text x="225" y="97.5">Refers to a good or</text><text x="225" y="101.3">service being offered.</text>
<text x="225" y="127.2">Refers to a good or</text><text x="225" y="131">service being offered.</text></g>
</g>
</g>
</g>


<!-- MAIN SLIDE -->
<rect x="479.5" y="186.5" width="1307" height="736" fill="none" stroke="#9a9a9a" stroke-width="1"/>
<g id="slide2">
<rect x="480" y="187" width="1306" height="735" fill="#364555"/>
<circle cx="928.4" cy="722.7" r="94.6" fill="#0599aa"/>
<rect x="1000" y="296" width="329" height="81.5" rx="40.7" fill="#fe6652"/>
<polygon points="742,291 1120,291 1091,384 770,384" fill="#fe6652"/>
<rect x="571" y="395" width="330" height="80.5" rx="40.2" fill="#a3d5d6"/>
<polygon points="773,389 1087,389 1056,481.5 801.5,481.5" fill="#a3d5d6"/>
<rect x="950" y="493" width="307" height="81.3" rx="40.6" fill="#36587a"/>
<polygon points="803.4,487.4 1053.5,487.4 1023.7,579.6 833,579.6" fill="#36587a"/>
<rect x="628.7" y="593" width="330" height="80.5" rx="40.2" fill="#8f8c96"/>
<polygon points="833,584.2 1024,584.2 994.4,672 994.4,679.8 861.4,679.8 861.4,672" fill="#8f8c96"/>
<g fill="#ffffff" font-weight="bold">
<text x="895.2" y="328.2" font-size="24" textLength="90" lengthAdjust="spacingAndGlyphs">Title One</text>
<text x="888.8" y="422.1" font-size="24" textLength="91" lengthAdjust="spacingAndGlyphs">Title Two</text>
<text x="878.4" y="520.6" font-size="24" textLength="104.4" lengthAdjust="spacingAndGlyphs">Title Three</text>
<text x="886.6" y="618.6" font-size="19" textLength="82" lengthAdjust="spacingAndGlyphs">Title Four</text>
<text x="880" y="748" font-size="26.5" textLength="99.6" lengthAdjust="spacingAndGlyphs">$10,000</text>
</g>
<g fill="#ffffff" font-size="16">
<text x="872.5" y="347.2" textLength="136.3" lengthAdjust="spacingAndGlyphs">Refers to a good or</text>
<text x="865.4" y="367.8" textLength="154.7" lengthAdjust="spacingAndGlyphs">service being offered.</text>
<text x="866.5" y="441.3" textLength="136.5" lengthAdjust="spacingAndGlyphs">Refers to a good or</text>
<text x="859.5" y="461.8" textLength="154.5" lengthAdjust="spacingAndGlyphs">service being offered.</text>
<text x="862" y="539" textLength="137" lengthAdjust="spacingAndGlyphs">Refers to a good or</text>
<text x="855.4" y="559.2" textLength="155" lengthAdjust="spacingAndGlyphs">service being offered.</text>
<text x="870.8" y="637" font-size="14.5" textLength="114.3" lengthAdjust="spacingAndGlyphs">Refers to a good or</text>
<text x="865" y="653.4" font-size="14.5" textLength="128.5" lengthAdjust="spacingAndGlyphs">service being offered.</text>
</g>
<g font-weight="bold" font-size="27">
<text x="1171" y="347.5" fill="#364555" textLength="99.6" lengthAdjust="spacingAndGlyphs">$30,000</text>
<text x="628.7" y="446.1" fill="#364555" textLength="115" lengthAdjust="spacingAndGlyphs">$130,000</text>
<text x="1085.8" y="546.2" fill="#364555" textLength="115" lengthAdjust="spacingAndGlyphs">$150,000</text>
<text x="692.6" y="645" fill="#364555" textLength="115.4" lengthAdjust="spacingAndGlyphs">$230,000</text>
</g>
<g fill="#ffffff">
<text x="1394.3" y="484" font-size="56" font-weight="bold" textLength="228.5" lengthAdjust="spacingAndGlyphs">Purchase</text>
<text x="1394.5" y="548.6" font-size="56" font-weight="bold" textLength="170" lengthAdjust="spacingAndGlyphs">Funnel</text>
<g font-size="20.5">
<text x="1394.8" y="603" textLength="302.8" lengthAdjust="spacingAndGlyphs">Marketers must link the price to</text>
<text x="1394.8" y="629.5" textLength="291.5" lengthAdjust="spacingAndGlyphs">the real and perceived value of</text>
<text x="1394.8" y="655.7" textLength="297" lengthAdjust="spacingAndGlyphs">the product, but they also must</text>
<text x="1394.8" y="681.2" textLength="291.5" lengthAdjust="spacingAndGlyphs">take into account supply costs,</text>
<text x="1394.8" y="707" textLength="284" lengthAdjust="spacingAndGlyphs">seasonal discounts, and prices</text>
<text x="1394.8" y="733.2" textLength="196" lengthAdjust="spacingAndGlyphs">used by competitors.</text>
</g>
</g>
</g>

<g id="rscroll">
<path d="M1911,172 V873.3 H1901.3 A10,10 0 0 1 1891.3,863.3 V182 A10,10 0 0 1 1901.3,172 Z" fill="#3c3b3b"/>
<path d="M1901.5,178.5 L1907,186.7 H1896 Z" fill="#c8c8c8" stroke="#c8c8c8" stroke-width="1" stroke-linejoin="round"/>
<rect x="1896" y="275.8" width="11" height="82.2" rx="5.5" fill="#c8c8c8"/>
<path d="M1901.5,867.5 L1907,859.6 H1896 Z" fill="#c8c8c8" stroke="#c8c8c8" stroke-width="1" stroke-linejoin="round"/>
<g fill="#c8c8c8" stroke="#c8c8c8" stroke-width="1" stroke-linejoin="round">
<path d="M1901.5,876.5 L1907,883 H1896 Z"/><path d="M1901.5,883.5 L1907,890.5 H1896 Z"/>
<path d="M1901.5,904.5 L1907,897.5 H1896 Z"/><path d="M1901.5,912 L1907,905 H1896 Z"/>
</g>
</g>
<!-- share icon -->
<g fill="none" stroke="#1f1a17" stroke-width="1.3">
<path d="M1813.5,27 V35.3 H1824.5 V31"/>
<path d="M1816,31.5 Q1817,25 1825,25 M1822.5,22 L1826,25 L1822.5,28"/>
</g>
<polyline points="1884.8,27.5 1888.4,31 1892,27.5" fill="none" stroke="#1f1a17" stroke-width="1.2"/>

<!-- STATUS BAR -->
<g id="status">
<line x1="374" y1="940.5" x2="1911" y2="940.5" stroke="#8a8886" stroke-width="1"/>
<rect x="0" y="942" width="1911" height="24" fill="#51504e"/>
<line x1="0" y1="942.5" x2="1911" y2="942.5" stroke="#3f3d3c" stroke-width="1.2"/>
<g fill="#f2f2f2" font-size="13.5">
<text x="6.9" y="962" textLength="65.9" lengthAdjust="spacingAndGlyphs">Slide 2 of 8</text>
<text x="115" y="962" textLength="80.6" lengthAdjust="spacingAndGlyphs">English (India)</text>
<text x="240.2" y="962" textLength="144.3" lengthAdjust="spacingAndGlyphs">Accessibility: Good to go</text>
<text x="1297.5" y="962" textLength="33.8" lengthAdjust="spacingAndGlyphs">Notes</text>
<text x="1379.3" y="962" textLength="61.4" lengthAdjust="spacingAndGlyphs">Comments</text>
<text x="1845" y="962" textLength="24.1" lengthAdjust="spacingAndGlyphs">41%</text>
</g>
<!-- accessibility icon -->
<g fill="none" stroke="#f2f2f2" stroke-width="1.2">
<circle cx="225" cy="951.5" r="2"/>
<path d="M218.5,955 Q222,957 225,956 Q228,957 231.5,954.5 M225,956 V961 L222,966 M225,961 L227.5,964"/>
<path d="M229.5,963 L231.5,965 L236,959.5"/>
</g>
<!-- notes icon -->
<g fill="none" stroke="#f2f2f2" stroke-width="1.1">
<path d="M1280.5,953 L1284.5,949 L1288.5,953"/>
<path d="M1275,957.5 H1295 M1275,961.5 H1295 M1275,965.5 H1295"/>
</g>
<!-- comments icon -->
<path d="M1358.5,948.5 H1375.5 V961 H1365 L1361,965 V961 H1358.5 Z" fill="none" stroke="#f2f2f2" stroke-width="1.2"/>
<!-- normal view highlight -->
<rect x="1466" y="944" width="50.2" height="22" fill="#605e5c"/>
<g fill="none" stroke="#f2f2f2" stroke-width="1.2">
<rect x="1482" y="949" width="18" height="14.5"/>
<rect x="1486" y="951.5" width="11" height="7"/>
<line x1="1484.2" y1="951" x2="1484.2" y2="961.5"/>
<rect x="1532.5" y="949" width="7" height="6"/><rect x="1542.5" y="949" width="7" height="6"/>
<rect x="1532.5" y="958" width="7" height="6"/><rect x="1542.5" y="958" width="7" height="6"/>
<path d="M1582.5,950.5 Q1586.5,948.5 1590.5,950.5 Q1594.5,948.5 1598.5,950.5 V963.5 Q1594.5,961.5 1590.5,963.5 Q1586.5,961.5 1582.5,963.5 Z M1590.5,950.5 V963.5 M1584.5,953.5 H1588.5 M1584.5,956.5 H1588.5 M1592.5,953.5 H1596.5 M1592.5,956.5 H1596.5"/>
<path d="M1631.5,948.5 H1648.5 M1633.5,948.5 V957.5 H1646.5 V948.5 M1640,957.5 V964.5 M1636,964.5 H1644"/>
</g>
<g stroke="#f2f2f2" stroke-width="1.2">
<line x1="1672.5" y1="957" x2="1683" y2="957"/>
<line x1="1820.5" y1="957" x2="1830" y2="957"/><line x1="1825.2" y1="952" x2="1825.2" y2="962"/>
</g>
<line x1="1689" y1="957.5" x2="1813.5" y2="957.5" stroke="#bdbdbd" stroke-width="1"/>
<line x1="1751.5" y1="954" x2="1751.5" y2="961" stroke="#bdbdbd" stroke-width="1"/>
<rect x="1709.5" y="950" width="6.5" height="14" fill="#c8c8c8"/>
<!-- fit icon -->
<g fill="none" stroke="#f2f2f2" stroke-width="1.2">
<rect x="1892" y="952" width="9" height="9"/>
<path d="M1893.5,949 L1896.5,946.5 L1899.5,949 M1893.5,964 L1896.5,966.5 L1899.5,964 M1889.5,953.5 L1887,956.5 L1889.5,959.5 M1903.5,953.5 L1906,956.5 L1903.5,959.5"/>
</g>
</g>

</svg>
</body></html>
